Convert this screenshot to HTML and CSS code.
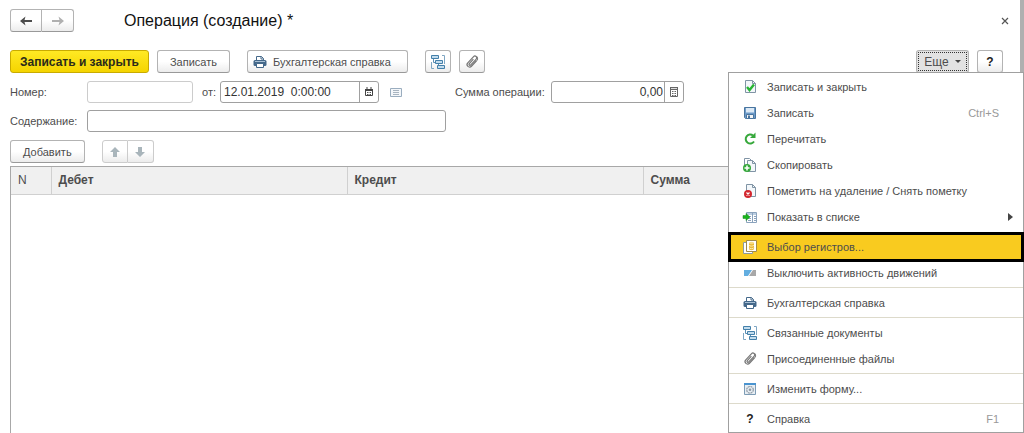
FILE: index.html
```html
<!DOCTYPE html>
<html lang="ru">

<head>
    <meta charset="UTF-8">
    <meta name="viewport" content="width=device-width, initial-scale=1.0">
    <title>Операция (создание) *</title>
    <link rel="stylesheet" href="styles.css">
</head>

<body>
    <!-- shared icons -->
    <svg class="sprite" aria-hidden="true">
        <symbol id="i-print" viewBox="0 0 16 16">
            <path d="M4.5 7V2.5h5l2 2V7" fill="#fff" stroke="#44688a" />
            <path d="M9 2.500v2.500h2.500" fill="none" stroke="#44688a" />
            <rect x="1.500" y="6" width="13" height="6" rx="1.500" fill="#44688a" />
            <rect x="3" y="7" width="10" height="1" fill="#a9c0d4" />
            <path d="M4.500 9.500h7v4h-7z" fill="#fff" stroke="#44688a" />
        </symbol>
        <symbol id="i-links" viewBox="0 0 16 16">
            <path d="M4 14.500H1.500V8M12 1.500h2.500V10" fill="none" stroke="#7fa6c3" />
            <path d="M3.500 5v3.500H6M8.500 9.500v3" stroke="#5b8fb5" fill="none" />
            <path d="M1.500 1.500h7v3h-7zM5.500 6.500h7v3h-7zM7.500 11.500h7v3h-7z" fill="#c3dced" stroke="#4480aa" />
        </symbol>
        <symbol id="i-clip" viewBox="0 0 16 16">
            <g transform="rotate(43 8 8)" fill="none" stroke="#777">
                <path d="M10.500 4v7.500a2.500 2.500 0 0 1-5 0V3a1.800 1.800 0 0 1 3.600 0v8a1 1 0 0 1-2 0V5" stroke-width="1.200" />
                <path d="M10.500 4v-1a2.500 2.500 0 0 0-3-2" />
            </g>
        </symbol>
    </svg>

    <main class="window">
        <header class="titlebar">
            <div class="btn-pair">
                <button class="btn" aria-label="Назад">
                    <svg class="icon" viewBox="0 0 16 16"><path d="M2 8l5.500-4.500L6.500 7H14v2H6.500l1 3.500z" fill="#4c4c4c" /></svg>
                </button>
                <button class="btn" aria-label="Вперед">
                    <svg class="icon" viewBox="0 0 16 16"><path d="M14 8L8.500 3.500l1 3.500H2v2h7.500l-1 3.500z" fill="#b0b0b0" /></svg>
                </button>
            </div>
            <h1>Операция (создание) *</h1>
            <button class="close" aria-label="Закрыть">
                <svg viewBox="0 0 8 8"><path d="M1 1l6 6M7 1L1 7" stroke="#555" stroke-width="1.200" /></svg>
            </button>
        </header>

        <div class="toolbar">
            <button class="btn primary">Записать и закрыть</button>
            <button class="btn">Записать</button>
            <button class="btn print"><svg class="icon"><use href="#i-print" /></svg>Бухгалтерская справка</button>
            <button class="btn square" aria-label="Связанные документы"><svg class="icon"><use href="#i-links" /></svg></button>
            <button class="btn square" aria-label="Присоединенные файлы"><svg class="icon"><use href="#i-clip" /></svg></button>
            <div class="more">
                <button class="btn more-btn" aria-haspopup="true" aria-expanded="true">Еще <span class="caret"></span></button>
                <ul class="menu">
                    <li><button>
                        <svg class="icon" viewBox="0 0 16 16"><path d="M3.500 1.500h7l3 3v9h-10z" fill="#f3f7fa" stroke="#8094a5" /><path d="M10.500 1.500v3h3" fill="none" stroke="#8094a5" /><path d="M5 8l2.500 3L12 5.500" fill="none" stroke="#27b534" stroke-width="2.400" /></svg>
                        Записать и закрыть</button></li>
                    <li><button>
                        <svg class="icon" viewBox="0 0 16 16"><path d="M2.500 2.500h11v11h-10l-1-1z" fill="#6d9bc9" stroke="#49759f" /><path d="M4 3h8v4.500H4z" fill="#dce9f5" /><path d="M4.500 9.500h7v4h-7z" fill="#f4f4f4" stroke="#49759f" /><path d="M6 10.500h2V13H6z" fill="#49759f" /></svg>
                        Записать<kbd>Ctrl+S</kbd></button></li>
                    <li><button>
                        <svg class="icon" viewBox="0 0 16 16"><path d="M12 10.500a4.500 4.500 0 1 1-1-6" fill="none" stroke="#36a83b" stroke-width="2" /><path d="M13.500 1.500v5.500H8z" fill="#36a83b" /></svg>
                        Перечитать</button></li>
                    <li><button>
                        <svg class="icon" viewBox="0 0 16 16"><path d="M2.500 9V1.500h5l2 2" fill="none" stroke="#8094a5" /><path d="M5.500 3.500h5l3 3v8h-8z" fill="#f3f7fa" stroke="#8094a5" /><path d="M10.500 3.500v3h3" fill="none" stroke="#8094a5" /><circle cx="5" cy="11" r="4" fill="#36a83b" /><path d="M5 8.500v5M2.500 11h5" stroke="#fff" stroke-width="1.500" /></svg>
                        Скопировать</button></li>
                    <li><button>
                        <svg class="icon" viewBox="0 0 16 16"><path d="M4.500 1.500h6l3 3v9h-9z" fill="#f3f7fa" stroke="#8094a5" /><path d="M10.500 1.500v3h3" fill="none" stroke="#8094a5" /><circle cx="6" cy="11" r="4" fill="#d3262e" /><path d="M4.500 9.500l3 3M7.500 9.500l-3 3" stroke="#fff" stroke-width="1.200" /></svg>
                        Пометить на удаление / Снять пометку</button></li>
                    <li><button>
                        <svg class="icon" viewBox="0 0 16 16"><path d="M4.500 3.500h10v10h-10z" fill="#fff" stroke="#8ba3bd" /><path d="M5 4h9v2H5z" fill="#bccfe2" /><path d="M10.500 4v9M6 7.500h3M6 9.500h3M6 11.500h3M12 7.500h2M12 9.500h2M12 11.500h2" stroke="#8ba3bd" /><path d="M1 6.500h3V4.500L8 8l-4 3.500v-2H1z" fill="#19b51c" stroke="#188a1b" stroke-width=".5" /></svg>
                        Показать в списке<span class="submenu"></span></button></li>
                    <li class="current"><button>
                        <svg class="icon" viewBox="0 0 16 16"><path d="M1.500 3.500h9v11h-9z" fill="#fff" stroke="#8c9aa0" /><path d="M4.500 1.500h10v11h-10z" fill="#fff" stroke="#a08a4a" /><path d="M7 4v6c0 1.500 5 1.500 5 0V4z" fill="#e9b93c" /><ellipse cx="9.500" cy="4" rx="2.500" ry="1.200" fill="#f7db83" /><path d="M7 6c0 1.500 5 1.500 5 0M7 8.500c0 1.500 5 1.500 5 0" fill="none" stroke="#fff0b0" /></svg>
                        Выбор регистров...</button></li>
                    <li><button>
                        <svg class="icon" viewBox="0 0 16 16"><path d="M2 5h8l-4 6H2z" fill="#63aee0" /><path d="M11 5h3v6H7z" fill="#a8a8a8" /></svg>
                        Выключить активность движений</button></li>
                    <li class="sep"><button><svg class="icon"><use href="#i-print" /></svg>Бухгалтерская справка</button></li>
                    <li class="sep"><button><svg class="icon"><use href="#i-links" /></svg>Связанные документы</button></li>
                    <li><button><svg class="icon"><use href="#i-clip" /></svg>Присоединенные файлы</button></li>
                    <li class="sep"><button>
                        <svg class="icon" viewBox="0 0 16 16"><path d="M2.500 2.500h11v11h-11z" fill="#e8eef3" stroke="#7d9cb5" /><path d="M2 2h12v2H2z" fill="#4a94d0" /><circle cx="8" cy="8.800" r="3.300" fill="none" stroke="#8d9aa5" stroke-width="1.200" stroke-dasharray="2 .6" /><circle cx="8" cy="8.800" r="1.300" fill="#8d9aa5" /></svg>
                        Изменить форму...</button></li>
                    <li class="sep"><button><b class="icon">?</b>Справка<kbd>F1</kbd></button></li>
                </ul>
            </div>
            <button class="btn square help">?</button>
        </div>

        <form class="form">
            <div class="row">
                <label class="caption" for="number">Номер:</label>
                <input class="field number" id="number" type="text" disabled>
                <label class="date-label" for="date">от:</label>
                <div class="field combo date">
                    <input id="date" type="text" value="12.01.2019  0:00:00">
                    <button type="button" aria-label="Выбрать дату">
                        <svg viewBox="0 0 10 10"><path d="M1.500 2.500h7v6h-7z" fill="#fff" stroke="#444" /><path d="M1 2h8v2H1zM2.500 0h1v2h-1zM6.500 0h1v2h-1z" fill="#444" /><path d="M3 5.500h4M3 7.500h4" stroke="#555" stroke-dasharray="1 .5" /></svg>
                    </button>
                </div>
                <svg class="list-icon" viewBox="0 0 12 10"><path d="M.5 1.500h11v8H.5z" fill="#f4f7fa" stroke="#9aadbf" /><path d="M3 3.500h6M3 5.500h6M3 7.500h6" stroke="#a8b4c0" /></svg>
                <label class="sum-label" for="sum">Сумма операции:</label>
                <div class="field combo sum">
                    <input id="sum" type="text" value="0,00">
                    <button type="button" aria-label="Калькулятор">
                        <svg viewBox="0 0 10 10"><path d="M1.500 .5h7v9h-7z" fill="#fff" stroke="#666" /><path d="M1 0h8v3H1z" fill="#666" /><path d="M2 1.500h6" stroke="#ddd" /><path d="M3 4.500h4M3 6.500h4M3 8.500h4" stroke="#666" stroke-dasharray="1 .5" /></svg>
                    </button>
                </div>
            </div>
            <div class="row">
                <label class="caption" for="content">Содержание:</label>
                <input class="field content" id="content" type="text">
            </div>
        </form>

        <div class="table-bar">
            <button class="btn">Добавить</button>
            <div class="btn-pair small">
                <button class="btn" aria-label="Вверх">
                    <svg class="icon" viewBox="0 0 16 16"><path d="M8 3l5 5h-3v5H6V8H3z" fill="#a9b5bb" /></svg>
                </button>
                <button class="btn" aria-label="Вниз">
                    <svg class="icon" viewBox="0 0 16 16"><path d="M8 13L3 8h3V3h4v5h3z" fill="#a9b5bb" /></svg>
                </button>
            </div>
        </div>

        <div class="grid">
            <table>
                <thead>
                    <tr>
                        <th class="col-n">N</th>
                        <th class="col-acc">Дебет</th>
                        <th class="col-acc">Кредит</th>
                        <th>Сумма</th>
                    </tr>
                </thead>
            </table>
        </div>
    </main>
</body>

</html>
```

FILE: styles.css
```css
* {
    box-sizing: border-box;
}

body {
    margin: 0;
    background: #fff;
    color: #4d4d4d;
    font: 11px/16px "Liberation Sans", Arial, sans-serif;
}

button,
input {
    font: inherit;
    color: inherit;
}

.sprite {
    display: none;
}

.icon {
    width: 16px;
    height: 16px;
    flex: none;
}

.window {
    display: flex;
    flex-direction: column;
    height: 100vh;
    padding: 9px 17px 0 10px;
    border-right: 4px solid #b0b0b0;
}

/* buttons */
.btn {
    display: flex;
    align-items: center;
    justify-content: center;
    height: 23px;
    padding: 0 12px;
    border: 1px solid #b3b3b3;
    border-bottom-color: #999;
    border-radius: 3px;
    background: linear-gradient(#fff 50%, #ececec);
    white-space: nowrap;
}

.btn.primary {
    padding: 0 9px;
    border-color: #c9ab00;
    background: linear-gradient(#ffe924, #f5d400);
    color: #2b2b1a;
    font-size: 12px;
    font-weight: bold;
}

.btn.square {
    width: 26px;
    padding: 0;
}

.btn-pair {
    display: flex;
}

.btn-pair .btn {
    width: 32px;
    padding: 0;
}

.btn-pair .btn:first-child {
    border-radius: 3px 0 0 3px;
}

.btn-pair .btn:last-child {
    border-left: 0;
    border-radius: 0 3px 3px 0;
}

.btn-pair.small .btn {
    width: 26px;
    border-color: #ccc;
}

/* title */
.titlebar {
    display: flex;
    align-items: center;
    height: 23px;
    margin-bottom: 18px;
}

h1 {
    margin: 0 auto 0 50px;
    color: #111;
    font-size: 16px;
    font-weight: normal;
}

.close {
    width: 8px;
    height: 8px;
    margin-right: -6px;
    padding: 0;
    border: 0;
    background: none;
}

.close svg {
    display: block;
}

/* command bar */
.toolbar {
    display: flex;
    gap: 8px;
    margin-bottom: 8px;
}

.btn.print {
    gap: 5px;
    margin: 0 9px;
    padding: 0 16px 0 4px;
}

.more {
    position: relative;
    margin-left: auto;
}

.more-btn {
    width: 53px;
    padding: 0;
    gap: 6px;
    background: #e2e2e2;
    font-size: 12px;
    outline: 1px dotted #333;
    outline-offset: -3px;
}

.caret {
    border: 3px solid transparent;
    border-top-color: #444;
    border-bottom: 0;
}

.help {
    color: #222;
    font-size: 12px;
    font-weight: bold;
}

/* drop-down menu */
.menu {
    position: absolute;
    z-index: 1;
    top: 22px;
    right: -55px;
    width: 296px;
    margin: 0;
    padding: 1px 0 0;
    border: 1px solid #a0a0a0;
    background: #fff;
    list-style: none;
}

.menu button {
    display: flex;
    align-items: center;
    gap: 9px;
    width: 100%;
    height: 26px;
    padding: 0 24px 0 13px;
    border: 0;
    background: none;
    text-align: left;
}

.menu .sep {
    margin-top: 1px;
    padding-top: 2px;
    border-top: 1px solid #dddacb;
}

.menu .current {
    margin: 2px -1px -2px;
    border: 3px solid #000;
}

.menu .current button {
    height: 24px;
    padding-left: 11px;
    background: #f9cb1f;
}

.menu kbd {
    margin-left: auto;
    color: #999;
    font: inherit;
}

.menu b {
    color: #222;
    font-size: 12px;
    text-align: center;
}

.submenu {
    margin: 0 -14px 0 auto;
    border: 4px solid transparent;
    border-left: 5px solid #444;
    border-right: 0;
}

/* document fields */
.form {
    display: flex;
    flex-direction: column;
    gap: 7px;
    margin-bottom: 8px;
}

.row {
    display: flex;
    align-items: center;
}

.caption {
    width: 77px;
}

.field {
    height: 22px;
    border: 1px solid #a0a0a0;
    border-radius: 3px;
    background: #fff;
    font-size: 12px;
}

.number {
    width: 106px;
    border-color: #ccc;
}

.content {
    width: 359px;
}

.combo {
    display: flex;
    color: #333;
}

.combo input {
    flex: 1;
    min-width: 0;
    padding: 0 3px;
    border: 0;
    background: none;
    white-space: pre;
}

.combo button {
    display: flex;
    align-items: center;
    justify-content: center;
    width: 19px;
    padding: 0;
    border: 0;
    border-left: 1px solid #a0a0a0;
    background: none;
}

.combo svg {
    width: 10px;
    height: 10px;
}

.date {
    width: 159px;
}

.date-label {
    width: 27px;
    padding-left: 9px;
}

.list-icon {
    width: 12px;
    height: 10px;
    margin-left: 11px;
}

.sum-label {
    width: 96px;
    margin-left: 53px;
    white-space: nowrap;
}

.sum {
    width: 133px;
}

.sum input {
    padding: 0 1px;
    text-align: right;
}

/* entries */
.table-bar {
    display: flex;
    gap: 17px;
    margin-bottom: 3px;
}

.grid {
    flex: 1;
    border: 1px solid #a8a8a8;
    border-bottom: 0;
}

.grid table {
    width: 100%;
    border-collapse: collapse;
    table-layout: fixed;
    font-size: 12px;
}

.grid th {
    height: 27px;
    padding: 0 7px;
    border-right: 1px solid #d0d0d0;
    border-bottom: 1px solid #d0d0d0;
    background: #f0f0f0;
    text-align: left;
}

.grid th:last-child {
    border-right: 0;
}

.grid .col-n {
    width: 40px;
    font-weight: normal;
}

.grid .col-acc {
    width: 296px;
}
```
